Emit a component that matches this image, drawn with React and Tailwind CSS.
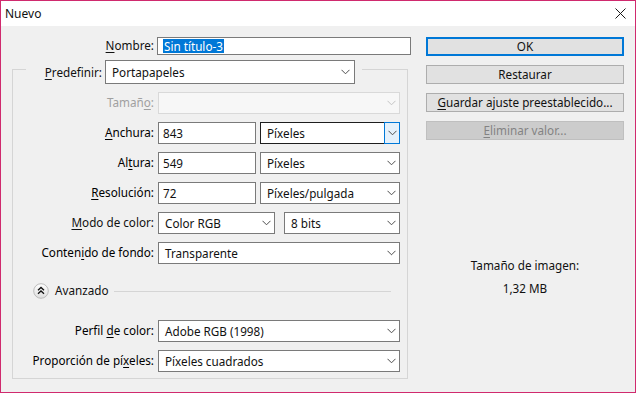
import React from "react";

const Chevron = ({ color = "#4d4d4d" }) => (
  <svg width="9" height="6" viewBox="0 0 9 6">
    <path d="M0.5 0.8 L4.5 4.8 L8.5 0.8" fill="none" stroke={color} strokeWidth="1" />
  </svg>
);

const L = ({ pre = "", u = "", post = "" }) => (
  <span>
    {pre}
    <span className="underline underline-offset-[2px] decoration-[1px]">{u}</span>
    {post}
  </span>
);

function Select({ w, value, disabled, focused }) {
  if (disabled) {
    return (
      <div className={`flex h-[22px] ${w} border border-[#d9d9d9] bg-[#f7f7f7]`}>
        <span className="flex-1" />
        <span className="w-[16px] flex items-center justify-center">
          <Chevron color="#c4c4c4" />
        </span>
      </div>
    );
  }
  if (focused) {
    return (
      <div className={`flex h-[22px] ${w} border border-[#1e1e1e] bg-white`}>
        <span className="flex-1 pl-[6px] leading-[20px] whitespace-nowrap">{value}</span>
        <span className="w-[16px] -my-[1px] -mr-[1px] flex items-center justify-center border border-[#0078d7] bg-[#e5f1fb]">
          <Chevron />
        </span>
      </div>
    );
  }
  return (
    <div className={`flex h-[22px] ${w} border border-[#7a7a7a] bg-white`}>
      <span className="flex-1 pl-[6px] leading-[20px] whitespace-nowrap">{value}</span>
      <span className="w-[16px] flex items-center justify-center">
        <Chevron />
      </span>
    </div>
  );
}

function Input({ w, value }) {
  return (
    <div className={`h-[22px] ${w} border border-[#7a7a7a] bg-white pl-[4px] leading-[20px]`}>
      {value}
    </div>
  );
}

function Row({ label, children, gray }) {
  return (
    <div className="flex items-center h-[22px]">
      <div className={`w-[141px] text-right ${gray ? "text-[#a0a0a0]" : "text-black"}`}>{label}</div>
      <div className="ml-[4px] flex gap-[4px]">{children}</div>
    </div>
  );
}

function Btn({ children, kind }) {
  if (kind === "default")
    return (
      <div className="h-[19px] border-2 border-[#0078d7] bg-[#e1e1e1] flex items-center justify-center leading-[15px]">
        {children}
      </div>
    );
  if (kind === "disabled")
    return (
      <div className="h-[19px] border border-[#bfbfbf] bg-[#cccccc] text-[#838383] flex items-center justify-center leading-[17px]">
        {children}
      </div>
    );
  return (
    <div className="h-[19px] border border-[#adadad] bg-[#e1e1e1] flex items-center justify-center leading-[17px]">
      {children}
    </div>
  );
}

export default function App() {
  return (
    <div className="w-[636px] h-[393px] border border-[#d02a6e] bg-[#f0f0f0] flex flex-col text-[11.7px] text-[#111] font-['Noto_Sans',sans-serif] overflow-hidden">
      <div className="h-[25px] shrink-0 bg-white flex items-center justify-between pl-[4px] pr-[9px]">
        <span className="leading-[16px] text-[12px]">Nuevo</span>
        <svg width="11" height="11" viewBox="0 0 11 11">
          <path d="M0.5 0.5 L10.5 10.5 M10.5 0.5 L0.5 10.5" stroke="#1a1a1a" strokeWidth="1" />
        </svg>
      </div>
      <div className="flex flex-1">
        {/* left column */}
        <div className="w-[410px] pt-[11px] flex flex-col">
          <div className="flex items-center h-[18px]">
            <div className="w-[153px] text-right">
              <L u="N" post="ombre:" />
            </div>
            <div className="ml-[3px] w-[254px] h-[18px] border border-[#7a7a7a] bg-white flex items-center pl-[5px]">
              <span className="bg-[#0078d7] text-white leading-[14px] px-[1px]">Sin título-3</span>
            </div>
          </div>
          <div className="mt-[5px] ml-[11px] w-[396px] flex flex-col">
            <div className="flex h-[24px]">
              <div className="w-[14px] mt-[9px] border-t border-l border-[#d5d5d5]" />
              <div className="w-[76px] text-right leading-[24px]">
                <L u="P" post="redefinir:" />
              </div>
              <div className="ml-[3px]">
                <div className="flex h-[24px] w-[250px] border border-[#7a7a7a] bg-white">
                  <span className="flex-1 pl-[6px] leading-[22px]">Portapapeles</span>
                  <span className="w-[18px] flex items-center justify-center">
                    <Chevron />
                  </span>
                </div>
              </div>
              <div className="flex-1 ml-[7px] mt-[9px] border-t border-r border-[#d5d5d5]" />
            </div>
            <div className="border-l border-r border-b border-[#d5d5d5] pt-[8px] pb-[6px] flex flex-col gap-[8px]">
              <Row label={<L pre="Tamañ" u="o" post=":" />} gray>
                <Select w="w-[242px]" disabled />
              </Row>
              <Row label={<L u="A" post="nchura:" />}>
                <Input w="w-[98px]" value="843" />
                <Select w="w-[140px]" value="Píxeles" focused />
              </Row>
              <Row label={<L pre="Al" u="t" post="ura:" />}>
                <Input w="w-[98px]" value="549" />
                <Select w="w-[140px]" value="Píxeles" />
              </Row>
              <Row label={<L u="R" post="esolución:" />}>
                <Input w="w-[98px]" value="72" />
                <Select w="w-[140px]" value="Píxeles/pulgada" />
              </Row>
              <div className="flex items-center h-[22px]">
                <div className="w-[141px] text-right">
                  <L u="M" post="odo de color:" />
                </div>
                <div className="ml-[4px] flex gap-[9px]">
                  <Select w="w-[117px]" value="Color RGB" />
                  <Select w="w-[116px]" value="8 bits" />
                </div>
              </div>
              <Row label={<L pre="Conten" u="i" post="do de fondo:" />}>
                <Select w="w-[242px]" value="Transparente" />
              </Row>
              <div className="flex items-center h-[18px] mt-[10px] mb-[12px]">
                <svg className="ml-[20px]" width="16" height="16" viewBox="0 0 16 16">
                  <defs>
                    <linearGradient id="g" x1="0" y1="0" x2="0" y2="1">
                      <stop offset="0" stopColor="#ffffff" />
                      <stop offset="1" stopColor="#dedede" />
                    </linearGradient>
                  </defs>
                  <circle cx="8" cy="8" r="7.3" fill="url(#g)" stroke="#b5b5b5" strokeWidth="0.9" />
                  <path d="M5 7.2 L8 4.4 L11 7.2 M5 10.8 L8 8 L11 10.8" fill="none" stroke="#111" strokeWidth="1.3" />
                </svg>
                <span className="ml-[6px]">Avanzado</span>
                <div className="flex-1 ml-[5px] mr-[16px] border-t border-[#d5d5d5]" />
              </div>
              <Row label={<L pre="Perfil " u="d" post="e color:" />}>
                <Select w="w-[242px]" value="Adobe RGB (1998)" />
              </Row>
              <Row label={<L pre="Proporción de pí" u="x" post="eles:" />}>
                <Select w="w-[242px]" value="Píxeles cuadrados" />
              </Row>
            </div>
          </div>
        </div>
        {/* right column */}
        <div className="ml-[15px] w-[198px] pt-[11px] flex flex-col">
          <div className="flex flex-col gap-[9px]">
            <Btn kind="default">OK</Btn>
            <Btn>Restaurar</Btn>
            <Btn>
              <L u="G" post="uardar ajuste preestablecido..." />
            </Btn>
            <Btn kind="disabled">
              <L u="E" post="liminar valor..." />
            </Btn>
          </div>
          <div className="mt-[117px] text-center leading-[16px]">Tamaño de imagen:</div>
          <div className="mt-[7px] text-center leading-[16px]">1,32 MB</div>
        </div>
      </div>
    </div>
  );
}
